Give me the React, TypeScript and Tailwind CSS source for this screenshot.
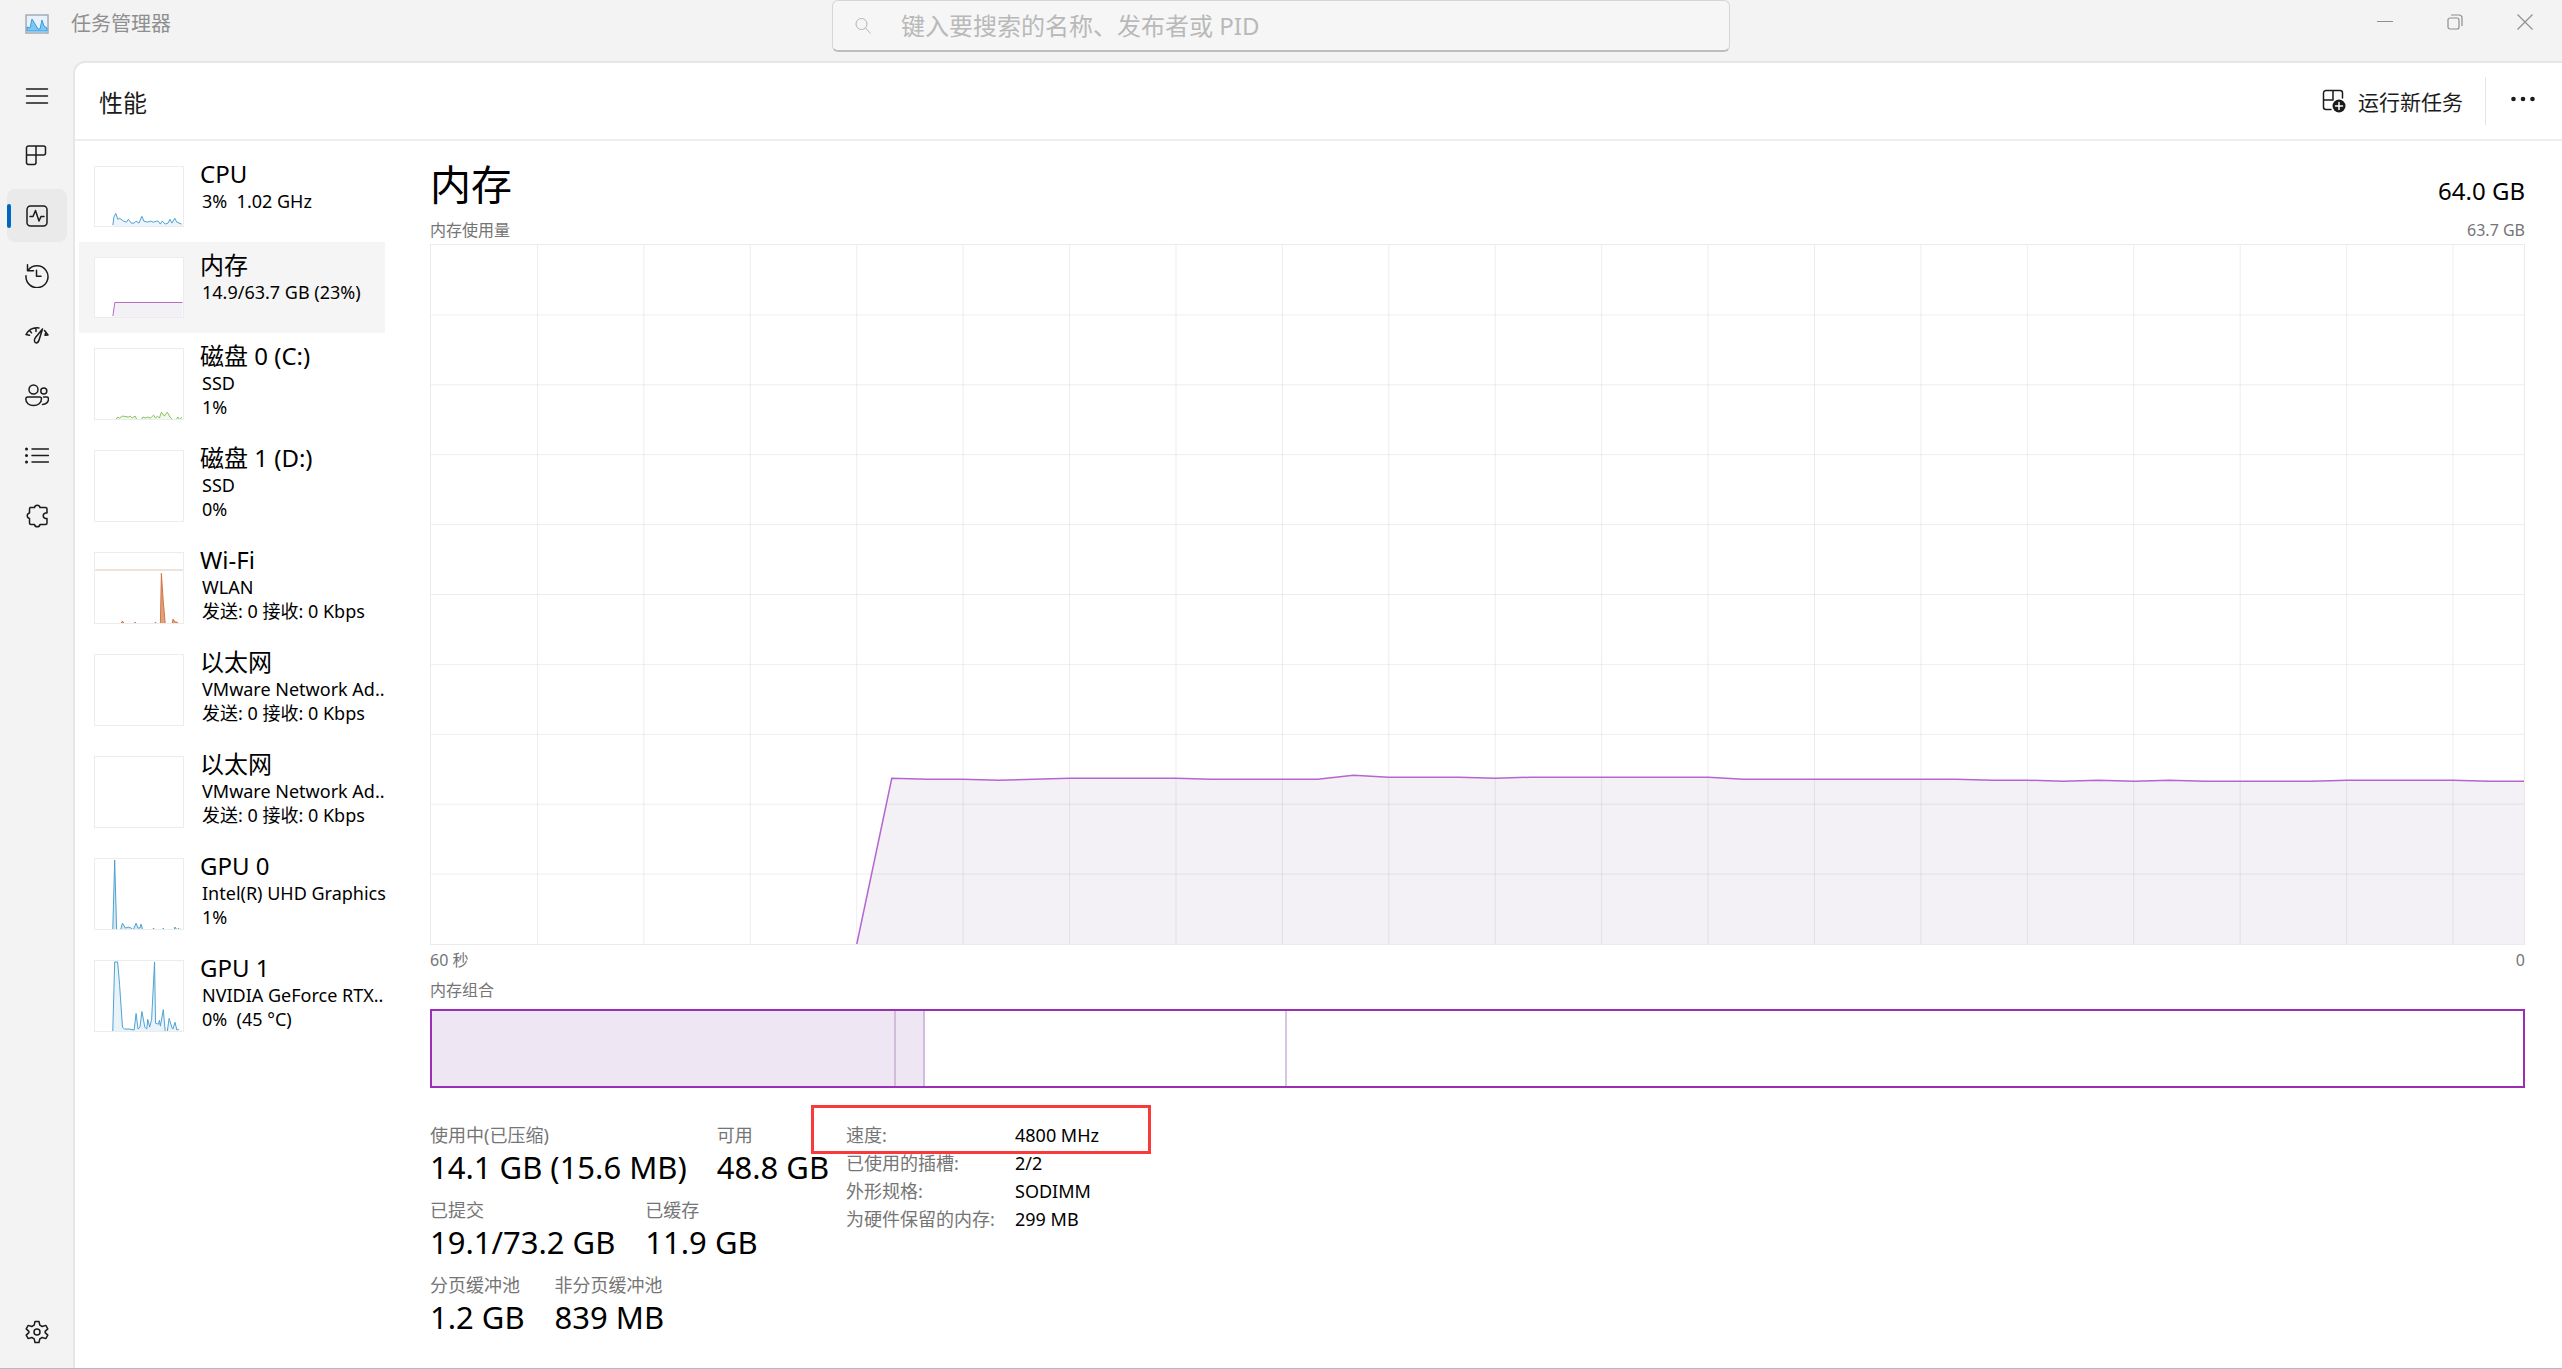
import React from 'react';

type Resource = {
  name: string;
  lines: string[];
  height: number;
  stroke: string;
  fill: string;
  points?: string;
  marker?: number;
};

const resources: Resource[] = [
  {
    name: 'CPU',
    lines: ['3%  1.02 GHz'],
    height: 61,
    stroke: '#4a9fd0',
    fill: '#eef5fa',
    points:
      '18,60 19,52 21,48 23,54 25,53 29,56 32,57 34,54 37,58 40,58 42,56 45,58 48,51 50,56 54,57 57,56 60,57 63,56 65,56 67,59 69,56 72,59 75,58 77,54 79,58 82,53 84,57 89,59'
  },
  {
    name: '内存',
    lines: ['14.9/63.7 GB (23%)'],
    height: 61,
    stroke: '#b466c8',
    fill: '#f3f1f5',
    points: '18,60 20,46 90,46'
  },
  {
    name: '磁盘 0 (C:)',
    lines: ['SSD', '1%'],
    height: 72,
    stroke: '#86c05a',
    fill: '#f1f8ec',
    points:
      '21,73 23,70 25,71 28,69 34,70 36,69 38,71 41,69 43,73 47,73 49,70 52,71 54,70 57,71 60,68 62,71 64,69 66,71 68,65 71,69 74,65 77,70 80,73 83,73 85,70 87,73 89,70'
  },
  { name: '磁盘 1 (D:)', lines: ['SSD', '0%'], height: 72, stroke: '#86c05a', fill: '#f1f8ec' },
  {
    name: 'Wi-Fi',
    lines: ['WLAN', '发送: 0 接收: 0 Kbps'],
    height: 72,
    stroke: '#cf7440',
    fill: '#dfa27e',
    points: '26,73 28,70 30,73 40,73 41,71 42,73 61,73 62,71 63,73 67,73 68,21 70,50 72,73 79,73 80,68 82,71 84,71 86,73',
    marker: 17
  },
  {
    name: '以太网',
    lines: ['VMware Network Ad..', '发送: 0 接收: 0 Kbps'],
    height: 72,
    stroke: '#cf7440',
    fill: '#dfa27e'
  },
  {
    name: '以太网',
    lines: ['VMware Network Ad..', '发送: 0 接收: 0 Kbps'],
    height: 72,
    stroke: '#cf7440',
    fill: '#dfa27e'
  },
  {
    name: 'GPU 0',
    lines: ['Intel(R) UHD Graphics', '1%'],
    height: 72,
    stroke: '#4a9fd0',
    fill: '#d5e8f4',
    points:
      '18,73 20,1 22,73 26,73 28,66 31,71 34,70 37,71 39,73 42,66 44,71 46,71 47,67 49,73 59,73 60,71 61,73 69,73 70,71 71,73 81,73 82,70 84,73 86,71'
  },
  {
    name: 'GPU 1',
    lines: ['NVIDIA GeForce RTX..', '0%  (45 °C)'],
    height: 72,
    stroke: '#4a9fd0',
    fill: '#eaf3fa',
    points:
      '18,73 20,1 23,1 25,24 28,68 30,70 35,70 40,71 42,54 44,70 46,68 48,52 51,68 53,70 54,60 56,68 58,60 61,1 62,64 65,65 66,61 67,67 70,50 72,73 74,73 76,59 79,69 80,70 82,63 84,71 86,70'
  }
];

// Memory in use, one sample per second; the y axis runs over 700 units
const samples = [
  700, 534, 535, 535, 536, 535, 534, 534, 534, 534, 535, 535, 535, 535, 531, 533, 533, 533, 534, 533, 533, 533, 533,
  533, 533, 535, 535, 535, 535, 535, 535, 535, 536, 536, 537, 536, 537, 536, 537, 537, 537, 537, 536, 536, 536, 536,
  537, 537
];

const chartPoints = samples.map((y, i) => `${Math.round(((i + 12) * 2094) / 59)},${y}`).join(' ');
const columns = Array.from({ length: 19 }, (_, i) => ((i + 1) * 3 * 2094) / 59);
const rows = Array.from({ length: 9 }, (_, i) => (i + 1) * 70);

const stats = [
  [
    { label: '使用中(已压缩)', value: '14.1 GB (15.6 MB)' },
    { label: '可用', value: '48.8 GB' }
  ],
  [
    { label: '已提交', value: '19.1/73.2 GB' },
    { label: '已缓存', value: '11.9 GB' }
  ],
  [
    { label: '分页缓冲池', value: '1.2 GB' },
    { label: '非分页缓冲池', value: '839 MB' }
  ]
];

const details = [
  { label: '速度:', value: '4800 MHz' },
  { label: '已使用的插槽:', value: '2/2' },
  { label: '外形规格:', value: 'SODIMM' },
  { label: '为硬件保留的内存:', value: '299 MB' }
];

const Icon = ({ children }: { children: React.ReactNode }) => (
  <svg
    viewBox="0 0 24 24"
    className="size-6"
    fill="none"
    stroke="currentColor"
    strokeWidth="1.5"
    strokeLinecap="round"
    strokeLinejoin="round"
    aria-hidden="true"
  >
    {children}
  </svg>
);

const navItems = [
  { label: '打开导航', icon: <path d="M1.5 5h21M1.5 12h21M1.5 19h21" /> },
  {
    label: '进程',
    icon: <path d="M3.5 2h15a2 2 0 0 1 2 2v5a2 2 0 0 1-2 2H11v7.500a2 2 0 0 1-2 2H3.500a2 2 0 0 1-2-2V4a2 2 0 0 1 2-2zM11 2v9H1.500" />
  },
  {
    label: '性能',
    icon: (
      <>
        <rect x="2" y="2" width="20" height="20" rx="3.500" />
        <path d="M5 12.500h3l2.500-6 3.500 10.500 2-4.500h3" />
      </>
    )
  },
  {
    label: '应用历史记录',
    icon: (
      <>
        <path d="M2.500 .8v6h6" />
        <path d="M3 6.300a11 11 0 1 1-2 5.500" />
        <path d="M11.500 6.300v6h4.500" />
      </>
    )
  },
  {
    label: '启动应用',
    icon: (
      <>
        <path d="M1 10.500a13 13 0 0 1 13-6.500M19.500 6.500l3.500 4.500M1 10.500l3.500.8M4.500 6.500l2 2.200M11 4v3.500M23 11l-3 .3 1-3" />
        <path d="M17.500 5l-7 8.500c-2 2.500-1 5.500.8 5.500 1.700 0 2.400-1.500 2.900-3.500z" />
      </>
    )
  },
  {
    label: '用户',
    icon: (
      <>
        <circle cx="8.500" cy="5.500" r="4.500" />
        <circle cx="18.800" cy="7" r="3" />
        <path d="M2.500 13h12a2 2 0 0 1 2 2c0 4-3.500 6.500-8 6.500S.8 19 .8 15a2 2 0 0 1 1.700-2zM18.500 13h3a2 2 0 0 1 2 2c0 3-2.500 5.500-6 5.500" />
      </>
    )
  },
  {
    label: '详细信息',
    icon: (
      <>
        <path d="M7 5h16.500M7 11.500h16.500M7 18h16.500" />
        <path d="M1.500 5h.01M1.500 11.500h.01M1.500 18h.01" strokeWidth="3" />
      </>
    )
  },
  {
    label: '服务',
    icon: (
      <path d="M5 3.500h4.500a2.800 2.800 0 0 1 5.500 0h5.500A1.500 1.500 0 0 1 22 5v4h-1.500a2.800 2.800 0 0 0 0 5.500H22V19a1.500 1.500 0 0 1-1.500 1.500H15a2.800 2.800 0 0 1-5.500 0H6A1.500 1.500 0 0 1 4.500 19v-4.500a2.800 2.800 0 0 1 0-5.500V5z" />
    )
  }
];

const NavButton = ({ label, active, children }: { label: string; active?: boolean; children: React.ReactNode }) => (
  <button
    aria-label={label}
    className={
      active
        ? 'relative flex h-[53px] w-[60px] items-center justify-center rounded-lg bg-[#eaeaea]'
        : 'relative flex h-[53px] w-[60px] items-center justify-center rounded-lg'
    }
  >
    {active && <span className="absolute left-0 h-6 w-1 rounded-full bg-[#0067c0]"></span>}
    <Icon>{children}</Icon>
  </button>
);

const TitleBar = () => (
  <header className="flex h-[61px] items-start text-[#8f8f8f]">
    <div className="flex-1">
      <div className="flex h-12 items-center gap-[22px] pl-[25px]">
        <svg viewBox="0 0 24 20" className="h-5 w-6" aria-hidden="true">
          <rect x="1" y="1" width="22" height="18" fill="#e9f2fa" stroke="#a3acb6" strokeWidth="1.500" />
          <path d="M2 17v-4l3 1 2-9 3 5 3 5 2 0 2-9 2 6 3 2v3z" fill="#7cc8f5" stroke="#3a9be0" />
        </svg>
        <span className="text-xl">任务管理器</span>
      </div>
    </div>
    <label className="flex h-[52px] w-[898px] items-center gap-[30px] rounded-md border border-b-2 border-[#d6d6d6] border-b-[#bebebe] bg-[#f6f6f6] pl-[22px]">
      <svg viewBox="0 0 16 16" className="size-4" fill="none" stroke="#b4b4b4" aria-hidden="true">
        <circle cx="6.500" cy="6" r="5.500" />
        <path d="M10.500 10l5 5.500" />
      </svg>
      <input
        type="text"
        aria-label="搜索"
        placeholder="键入要搜索的名称、发布者或 PID"
        className="flex-1 bg-transparent text-2xl outline-none placeholder:text-[#b9b9b9]"
      />
    </label>
    <div className="flex-1">
      <div className="flex h-[43px] justify-end pr-0.5">
        <button aria-label="最小化" className="flex w-[70px] items-center justify-center">
          <svg viewBox="0 0 16 16" className="size-4" fill="none" stroke="currentColor">
            <path d="M0 7.500h16" />
          </svg>
        </button>
        <button aria-label="还原" className="flex w-[70px] items-center justify-center">
          <svg viewBox="0 0 16 16" className="size-4" fill="none" stroke="currentColor" strokeWidth="1.200">
            <rect x="1" y="4" width="11" height="11" rx="2" />
            <path d="M4 1h8a3 3 0 0 1 3 3v8" />
          </svg>
        </button>
        <button aria-label="关闭" className="flex w-[70px] items-center justify-center">
          <svg viewBox="0 0 16 16" className="size-4" fill="none" stroke="currentColor" strokeWidth="1.200">
            <path d="M.5.5l15 15M15.500.5l-15 15" />
          </svg>
        </button>
      </div>
    </div>
  </header>
);

const ResourceItem = ({ item, active }: { item: Resource; active?: boolean }) => (
  <button
    className={
      active
        ? 'flex w-[306px] gap-4 bg-[#f5f5f5] py-[15px] pl-[15px] text-left'
        : 'flex w-[306px] gap-4 py-[15px] pl-[15px] text-left'
    }
  >
    <svg
      viewBox={`0 0 90 ${item.height}`}
      width="90"
      height={item.height}
      className="shrink-0 border border-[#ececec] bg-white"
      fill="none"
      aria-hidden="true"
    >
      {item.points && <polygon points={`18,${item.height} ${item.points} 90,${item.height}`} fill={item.fill} />}
      {item.points && <polyline points={item.points} stroke={item.stroke} />}
      {item.marker && <path d={`M0 ${item.marker}.5h90`} stroke="#dcc3b0" />}
    </svg>
    <span className="-my-2 block h-0 w-[190px] shrink-0 text-black">
      <span className="block text-2xl leading-[31px]">{item.name}</span>
      {item.lines.map((line) => (
        <span key={line} className="block overflow-hidden pl-0.5 text-lg leading-6 whitespace-pre">
          {line}
        </span>
      ))}
    </span>
  </button>
);

const MemoryChart = () => (
  <svg
    viewBox="0 0 2094 700"
    preserveAspectRatio="none"
    className="min-h-[300px] w-full flex-1 basis-0 border border-[#ebebeb]"
    fill="none"
    role="img"
    aria-label="内存使用量"
  >
    <polygon points={`${chartPoints} 2094,700`} fill="#f3f1f5" />
    {columns.map((x) => (
      <path key={x} d={`M${x} 0V700`} stroke="#000" strokeOpacity="0.07" vectorEffect="non-scaling-stroke" />
    ))}
    {rows.map((y) => (
      <path key={y} d={`M0 ${y}H2094`} stroke="#000" strokeOpacity="0.07" vectorEffect="non-scaling-stroke" />
    ))}
    <polyline points={chartPoints} stroke="#b466d0" strokeWidth="1.500" vectorEffect="non-scaling-stroke" />
  </svg>
);

const App = () => {
  return (
    <div className="flex min-h-screen flex-col border-b border-[#b3bac4] bg-[#f3f3f3] font-['Noto_Sans','Noto_Sans_CJK_SC',sans-serif] text-[#1b1b1b]">
      <TitleBar />

      <div className="flex flex-1">
        <nav className="flex w-[73px] shrink-0 flex-col gap-[7px] pt-2 pb-[10px] pl-[7px]">
          {navItems.map((item) => (
            <NavButton key={item.label} label={item.label} active={item.label === '性能'}>
              {item.icon}
            </NavButton>
          ))}
          <div className="mt-auto">
            <NavButton label="设置">
              <circle cx="12" cy="12" r="3" />
              <path d="M10 1.500h4l.8 3.600 2.400 1.400 3.600-1.100 2 3.500-2.700 2.500v1.200l2.700 2.500-2 3.500-3.600-1.100-2.400 1.400-.8 3.600h-4l-.8-3.600-2.400-1.400-3.600 1.100-2-3.500 2.700-2.500v-1.200L1.200 8.900l2-3.500 3.600 1.100 2.400-1.400z" />
            </NavButton>
          </div>
        </nav>

        <div className="flex flex-1 flex-col rounded-tl-xl border-t-2 border-l-2 border-[#e6e6e6] bg-white">
          {/* Page header */}
          <div className="flex h-[78px] items-center border-b-2 border-[#eeeeee] pt-1 pl-6">
            <h1 className="text-2xl">性能</h1>
            <button className="ml-auto flex items-center gap-3">
              <span className="pb-1">
                <Icon>
                  <path d="M9 20.500H4a2.500 2.500 0 0 1-2.500-2.500V4A2.500 2.500 0 0 1 4 1.500h14A2.500 2.500 0 0 1 20.500 4v5M11 1.500V11M1.500 11H11" />
                  <circle cx="17" cy="17" r="6.500" fill="currentColor" stroke="none" />
                  <path d="M17 13.500v7M13.500 17h7" stroke="#fff" />
                </Icon>
              </span>
              <span className="text-[21px]">运行新任务</span>
            </button>
            <span className="mb-1 ml-[22px] h-12 w-px bg-[#e6e6e6]"></span>
            <button aria-label="更多选项" className="mr-[27px] ml-[25px]">
              <svg viewBox="0 0 24 24" className="mb-2 size-6" fill="currentColor">
                <circle cx="2.500" cy="12" r="2.300" />
                <circle cx="12" cy="12" r="2.300" />
                <circle cx="21.500" cy="12" r="2.300" />
              </svg>
            </button>
          </div>

          <div className="flex flex-1">
            {/* Resource list */}
            <div className="flex w-[355px] shrink-0 flex-col pt-2.5 pl-1">
              {resources.map((item, index) => (
                <ResourceItem key={index} item={item} active={index === 1} />
              ))}
            </div>

            {/* Memory details */}
            <main className="flex flex-1 flex-col pr-[37px] pb-8 text-black">
              <div className="flex items-center justify-between pt-[18px]">
                <h2 className="text-[41px] leading-[50px]">内存</h2>
                <span className="pt-3.5 text-2xl">64.0 GB</span>
              </div>
              <div className="flex justify-between pt-[7px] text-base leading-7 text-[#757575]">
                <span>内存使用量</span>
                <span>63.7 GB</span>
              </div>
              <MemoryChart />
              <div className="flex justify-between text-base leading-[30px] text-[#757575]">
                <span>60 秒</span>
                <span>0</span>
              </div>
              <div className="pb-1 text-base leading-[30px] text-[#757575]">内存组合</div>
              <div className="flex h-[79px] border-2 border-[#9a2fb5]">
                <div className="w-[22.200%] border-r-2 border-[#d3bbdc] bg-[#eee6f2]"></div>
                <div className="w-[1.400%] border-r-2 border-[#d3bbdc] bg-[#eee6f2]"></div>
                <div className="w-[17.300%] border-r-2 border-[#d9c6e0]"></div>
              </div>

              <div className="flex items-start pt-[33px]">
                <div className="flex w-[416px] flex-col gap-2.5">
                  {stats.map((row) => (
                    <dl key={row[0].label} className="flex gap-[30px] whitespace-nowrap">
                      {row.map((stat) => (
                        <div key={stat.label}>
                          <dt className="text-lg leading-7 text-[#757575]">{stat.label}</dt>
                          <dd className="text-[31px] leading-[37px]">{stat.value}</dd>
                        </div>
                      ))}
                    </dl>
                  ))}
                </div>
                <div className="relative">
                  <table className="text-left text-lg leading-[28px] whitespace-nowrap">
                    <tbody>
                      {details.map((row) => (
                        <tr key={row.label}>
                          <th className="w-[169px] p-0 font-normal text-[#757575]">{row.label}</th>
                          <td className="p-0">{row.value}</td>
                        </tr>
                      ))}
                    </tbody>
                  </table>
                  <span className="absolute -top-4 -left-[35px] h-[49px] w-[340px] border-3 border-[#fa3a3a]"></span>
                </div>
              </div>
            </main>
          </div>
        </div>
      </div>
    </div>
  );
};

export default App;
